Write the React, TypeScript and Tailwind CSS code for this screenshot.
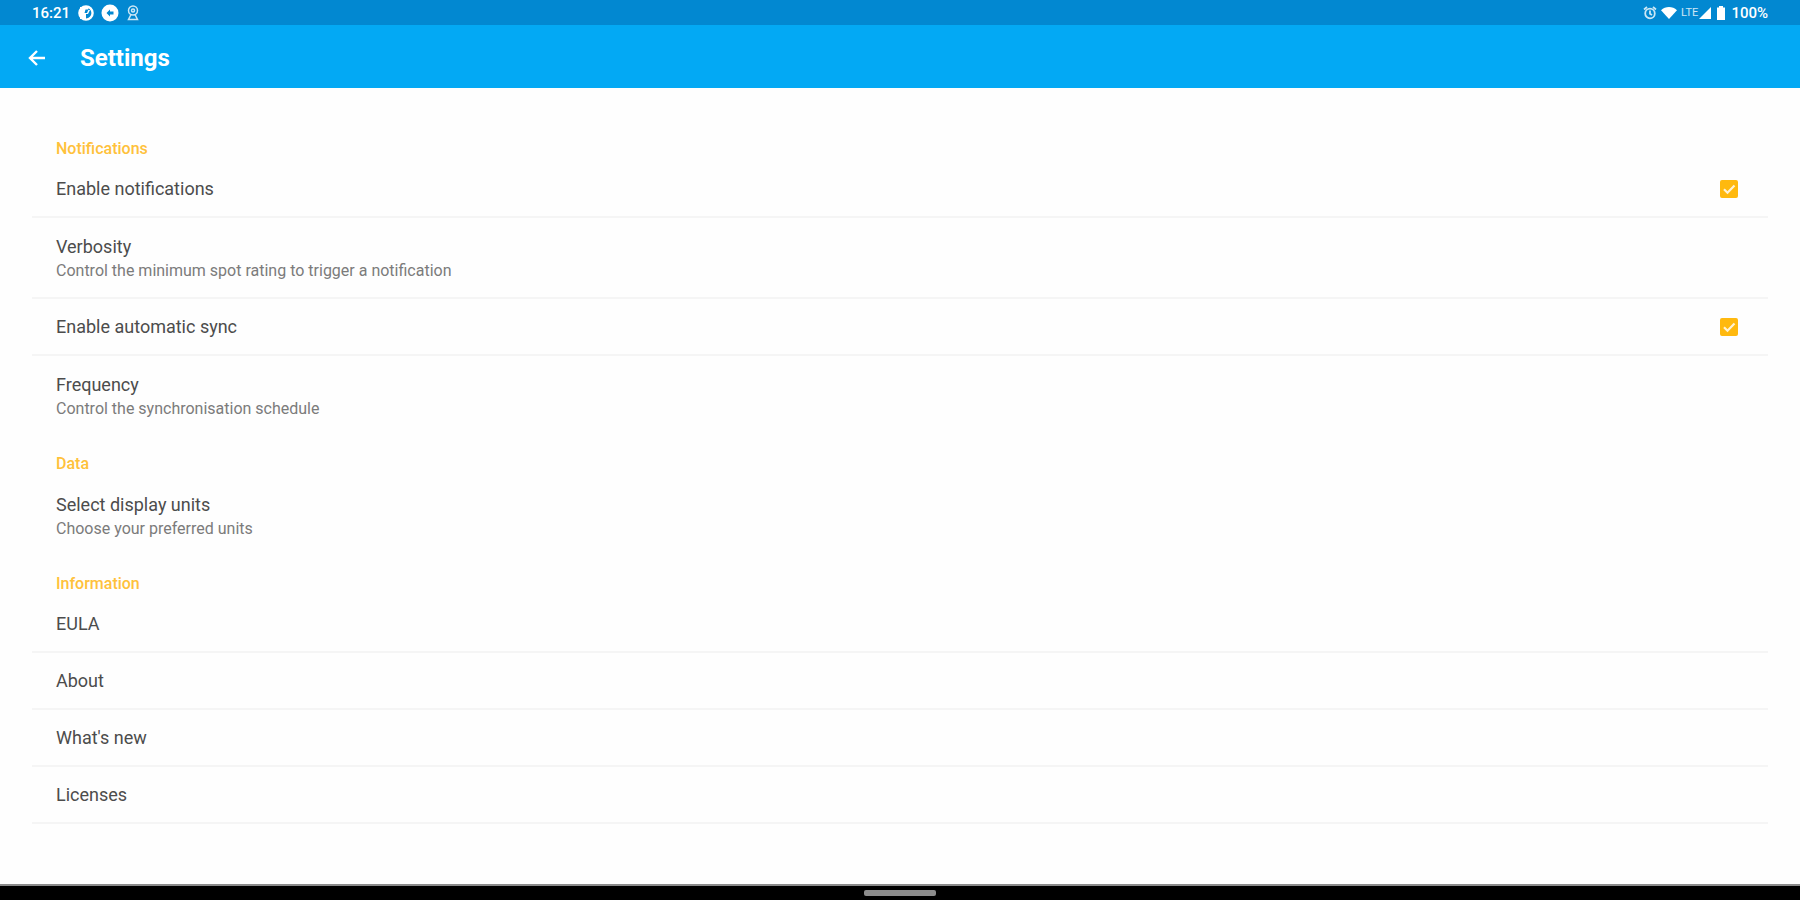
import { ReactNode, useState } from "react";

const StatusBar = () => (
  <div className="flex h-[25px] items-center justify-between bg-[#0288d1] px-8 text-[15px] leading-6 font-medium text-white">
    <div className="flex items-center">
      <span>16:21</span>
      <div className="ml-2 flex items-center gap-[7px]">
        <svg className="size-4" viewBox="0 0 16 16" fill="none">
          <circle cx="8" cy="8" r="6.6" stroke="currentColor" strokeWidth="2.4" />
          <path d="M7 2H2v12h6V9h2l2-4h-2l1-3z" fill="currentColor" />
          <path d="M7.5 4.5h3L9 8H6.5z" fill="#0288d1" />
        </svg>
        <svg className="size-[18px]" viewBox="0 0 18 18">
          <circle cx="9" cy="9" r="8.5" fill="currentColor" />
          <path
            d="M9 5.5 5.5 9 9 12.5v-2h3.5v-3H9z"
            fill="#0288d1"
          />
        </svg>
        <svg
          className="h-4 w-3.5 opacity-80"
          viewBox="0 0 14 16"
          fill="none"
          stroke="currentColor"
          strokeWidth="1.5"
        >
          <circle cx="7" cy="5.5" r="4.5" />
          <circle cx="7" cy="5.5" r="1.5" />
          <path d="M5 9.5 2.5 14.5h9L9 9.5" />
        </svg>
      </div>
    </div>
    <div className="flex items-center">
      <svg
        className="size-3.5 opacity-80"
        viewBox="0 0 14 14"
        fill="none"
        stroke="currentColor"
        strokeWidth="1.8"
      >
        <circle cx="7" cy="7.5" r="4.8" />
        <path d="M7 4.5v3.2l2 1.3M1 3.5 4 1M13 3.5 10 1" />
      </svg>
      <svg className="ml-1 h-3 w-4" viewBox="0 0 16 12" fill="currentColor">
        <path d="M8 12 0 3.2C4.5-1 11.5-1 16 3.2z" />
      </svg>
      <span className="ml-1 text-[11px] font-normal opacity-80">LTE</span>
      <svg className="ml-px size-3" viewBox="0 0 12 12" fill="currentColor">
        <path d="M12 0v12H0z" />
      </svg>
      <svg className="ml-1.5 h-3.5 w-2" viewBox="0 0 8 14" fill="currentColor">
        <path d="M2 0h4v1.5h2V14H0V1.5h2z" />
      </svg>
      <span className="ml-1.5">100%</span>
    </div>
  </div>
);

const AppBar = () => (
  <header className="flex h-[63px] items-center bg-[#03a9f4] px-7 pt-0.5 text-white">
    <button type="button" aria-label="Back" className="cursor-pointer">
      <svg
        className="size-[18px]"
        viewBox="0 0 18 18"
        fill="none"
        stroke="currentColor"
        strokeWidth="2.4"
      >
        <path d="M9 2 2 9l7 7M2 9h15" />
      </svg>
    </button>
    <h1 className="ml-[34px] text-2xl leading-7 font-bold">Settings</h1>
  </header>
);

const Section = ({ title, children }: { title: string; children: ReactNode }) => (
  <section>
    <h2 className="px-6 pt-4 pb-px text-base leading-[22px] font-medium text-[#ffc13b]">
      {title}
    </h2>
    <ul>{children}</ul>
  </section>
);

const Row = ({ divider = true, children }: { divider?: boolean; children: ReactNode }) => (
  <li className={divider ? "border-b-2 border-[#f5f5f5]" : "pb-0.5"}>{children}</li>
);

const CheckRow = ({ label }: { label: string }) => {
  const [checked, setChecked] = useState(true);

  return (
    <Row>
      <label className="flex h-[55px] cursor-pointer items-center justify-between pr-[30px] pl-6 text-lg leading-6">
        {label}
        <span className="relative flex">
          <input
            type="checkbox"
            className="size-[18px] appearance-none rounded-xs border-2 border-[#757575] checked:border-[#ffb90f] checked:bg-[#ffb90f]"
            checked={checked}
            onChange={(e) => setChecked(e.target.checked)}
          />
          {checked && (
            <svg
              className="pointer-events-none absolute inset-0 size-[18px] text-[#fff3d6]"
              viewBox="0 0 18 18"
              fill="none"
              stroke="currentColor"
              strokeWidth="2.2"
            >
              <path d="m4 9.2 3.5 3.5L14.5 5.5" />
            </svg>
          )}
        </span>
      </label>
    </Row>
  );
};

const ChoiceRow = ({
  title,
  summary,
  divider,
}: {
  title: string;
  summary: string;
  divider?: boolean;
}) => (
  <Row divider={divider}>
    <button
      type="button"
      className="flex min-h-[79px] w-full cursor-pointer flex-col px-6 pt-[17px] text-left"
    >
      <span className="text-lg leading-6">{title}</span>
      <span className="text-base leading-6 text-[#7b7b7b]">{summary}</span>
    </button>
  </Row>
);

const LinkRow = ({ label }: { label: string }) => (
  <Row>
    <a href="#" className="flex h-[55px] items-center px-6 text-lg leading-6">
      {label}
    </a>
  </Row>
);

export default function App() {
  return (
    <div className="flex min-h-screen flex-col bg-[#fefefe] font-['Roboto',sans-serif] text-[#4c4c4c]">
      <StatusBar />
      <AppBar />
      <main className="flex-1 px-8 pt-[34px] pb-8">
        <Section title="Notifications">
          <CheckRow label="Enable notifications" />
          <ChoiceRow
            title="Verbosity"
            summary="Control the minimum spot rating to trigger a notification"
          />
          <CheckRow label="Enable automatic sync" />
          <ChoiceRow
            title="Frequency"
            summary="Control the synchronisation schedule"
            divider={false}
          />
        </Section>
        <Section title="Data">
          <ChoiceRow
            title="Select display units"
            summary="Choose your preferred units"
            divider={false}
          />
        </Section>
        <Section title="Information">
          <LinkRow label="EULA" />
          <LinkRow label="About" />
          <LinkRow label="What's new" />
          <LinkRow label="Licenses" />
        </Section>
      </main>
      <footer className="flex h-4 items-center justify-center border-t-2 border-[#8a8a8a] bg-black">
        <div className="h-1.5 w-[72px] rounded-xs bg-[#8c8c8c]" />
      </footer>
    </div>
  );
}
